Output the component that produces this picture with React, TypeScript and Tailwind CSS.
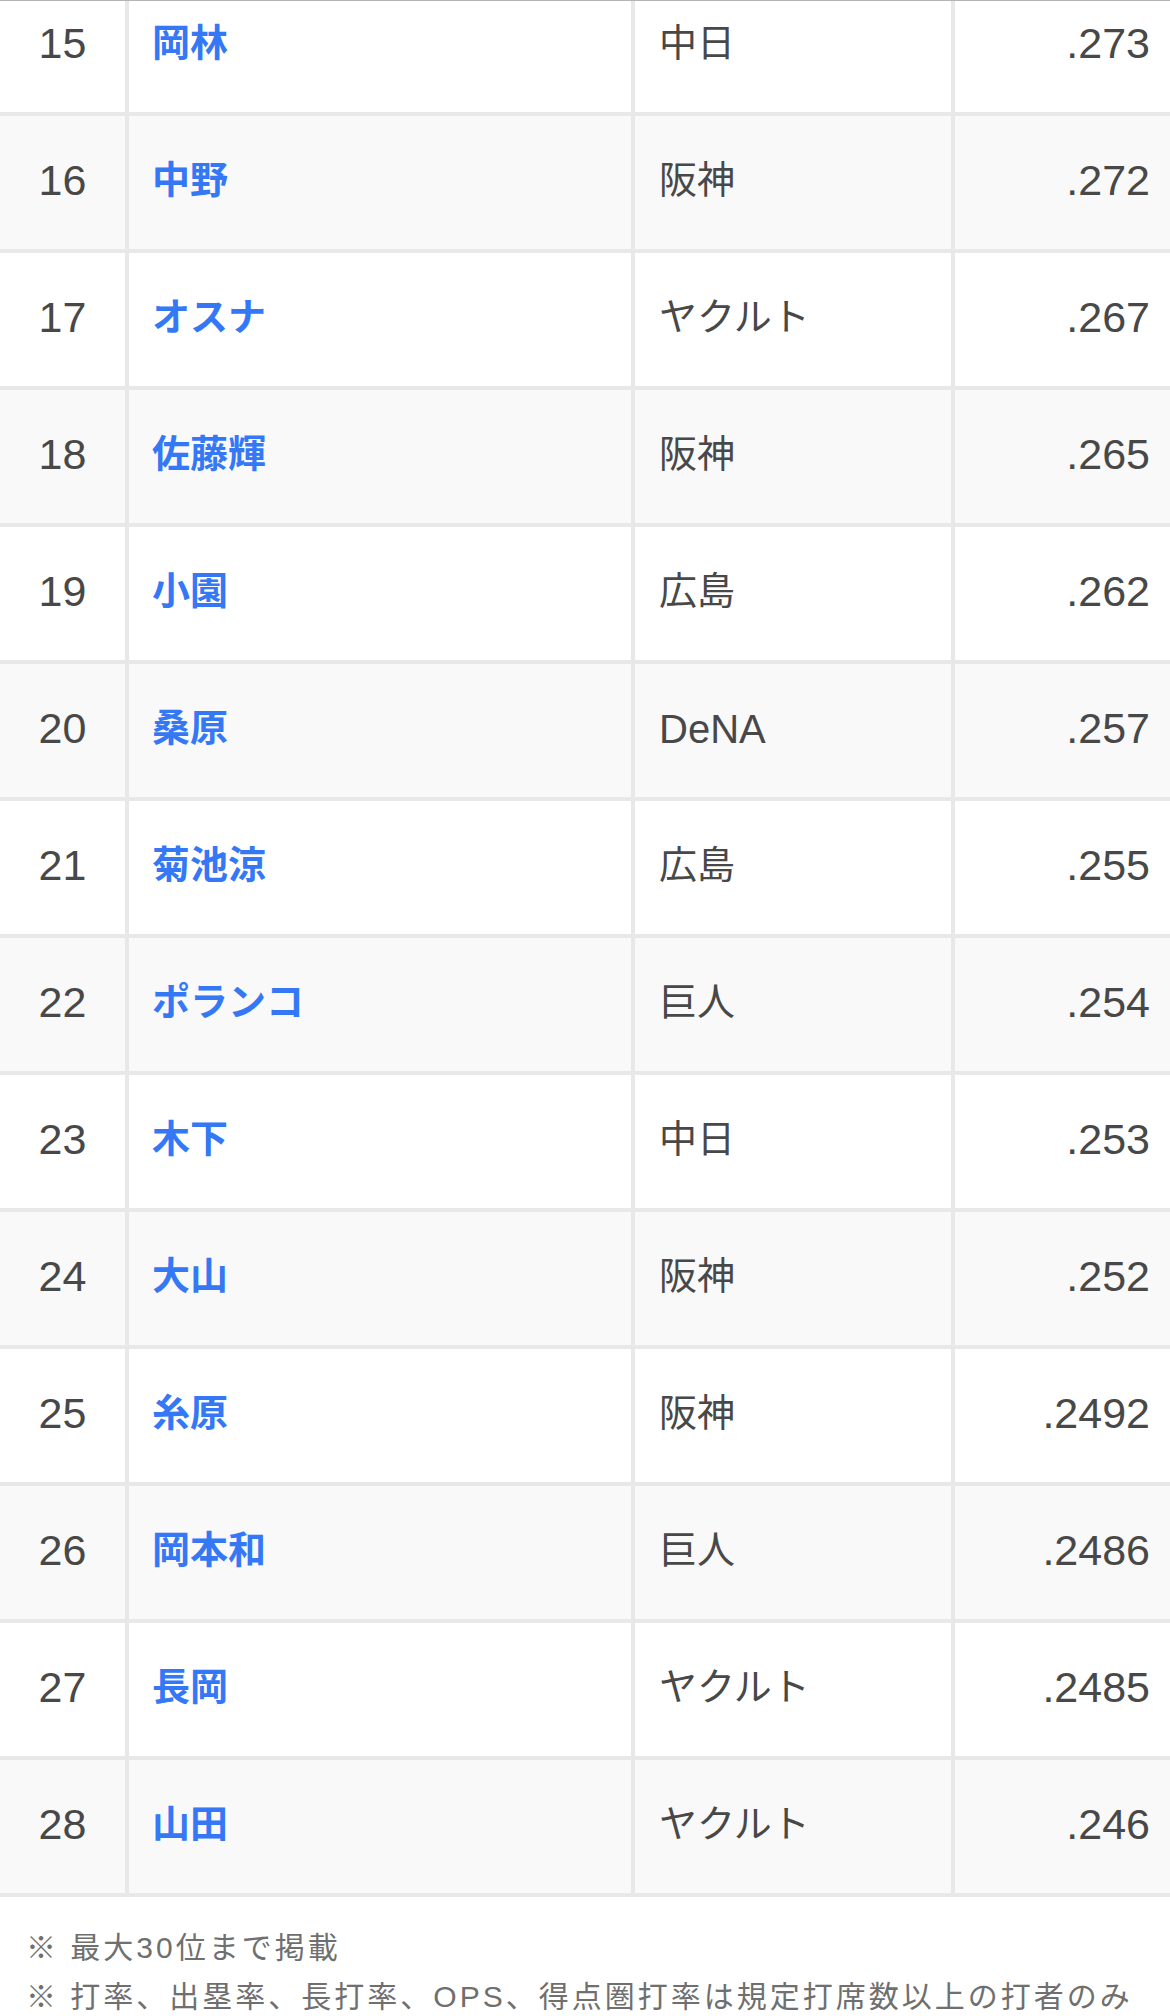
const rows = [
  { rank: 15, name: '岡林', team: '中日', avg: '.273' },
  { rank: 16, name: '中野', team: '阪神', avg: '.272' },
  { rank: 17, name: 'オスナ', team: 'ヤクルト', avg: '.267' },
  { rank: 18, name: '佐藤輝', team: '阪神', avg: '.265' },
  { rank: 19, name: '小園', team: '広島', avg: '.262' },
  { rank: 20, name: '桑原', team: 'DeNA', avg: '.257' },
  { rank: 21, name: '菊池涼', team: '広島', avg: '.255' },
  { rank: 22, name: 'ポランコ', team: '巨人', avg: '.254' },
  { rank: 23, name: '木下', team: '中日', avg: '.253' },
  { rank: 24, name: '大山', team: '阪神', avg: '.252' },
  { rank: 25, name: '糸原', team: '阪神', avg: '.2492' },
  { rank: 26, name: '岡本和', team: '巨人', avg: '.2486' },
  { rank: 27, name: '長岡', team: 'ヤクルト', avg: '.2485' },
  { rank: 28, name: '山田', team: 'ヤクルト', avg: '.246' },
];

const font = { fontFamily: '"Liberation Sans", "Noto Sans CJK JP", sans-serif' };

export default function App() {
  return (
    <div className="w-[1170px] min-h-[2016px] bg-white" style={font}>
      <div className="border-t border-[#b3b3b3] overflow-hidden">
        <div className="-mt-[22px]">
          {rows.map((row) => (
            <RankRow key={row.rank} {...row} />
          ))}
        </div>
      </div>

      <div className="pt-[26px] pl-[26px] text-[30px] leading-[49px] tracking-[3px] text-[#6f6f6f]">
        <p>※ 最大30位まで掲載</p>
        <p>※ 打率、出塁率、長打率、OPS、得点圏打率は規定打席数以上の打者のみ</p>
      </div>
    </div>
  );
}

function RankRow({ rank, name, team, avg }: { rank: number; name: string; team: string; avg: string }) {
  const striped = rank % 2 === 0;
  const latinTeam = /^[A-Za-z]+$/.test(team);
  return (
    <div
      className={`flex h-[137px] border-b-4 border-[#e8e8e8] text-[#484848] ${
        striped ? 'bg-[#f9f9f9]' : 'bg-white'
      }`}
    >
      <div className="w-[125px] flex items-center justify-center pb-1 text-[43px]">{rank}</div>
      <div className="w-[506px] border-l-4 border-[#e8e8e8] flex items-center pl-[23px] pb-1">
        <span className="font-bold text-[#3478f6] text-[38px]">{name}</span>
      </div>
      <div
        className={`w-[320px] border-l-4 border-[#e8e8e8] flex items-center pl-6 pb-1 ${
          latinTeam ? 'text-[40px]' : 'text-[38px]'
        }`}
      >
        {team}
      </div>
      <div className="flex-1 border-l-4 border-[#e8e8e8] flex items-center justify-end pr-5 pb-1 text-[43px]">
        {avg}
      </div>
    </div>
  );
}
